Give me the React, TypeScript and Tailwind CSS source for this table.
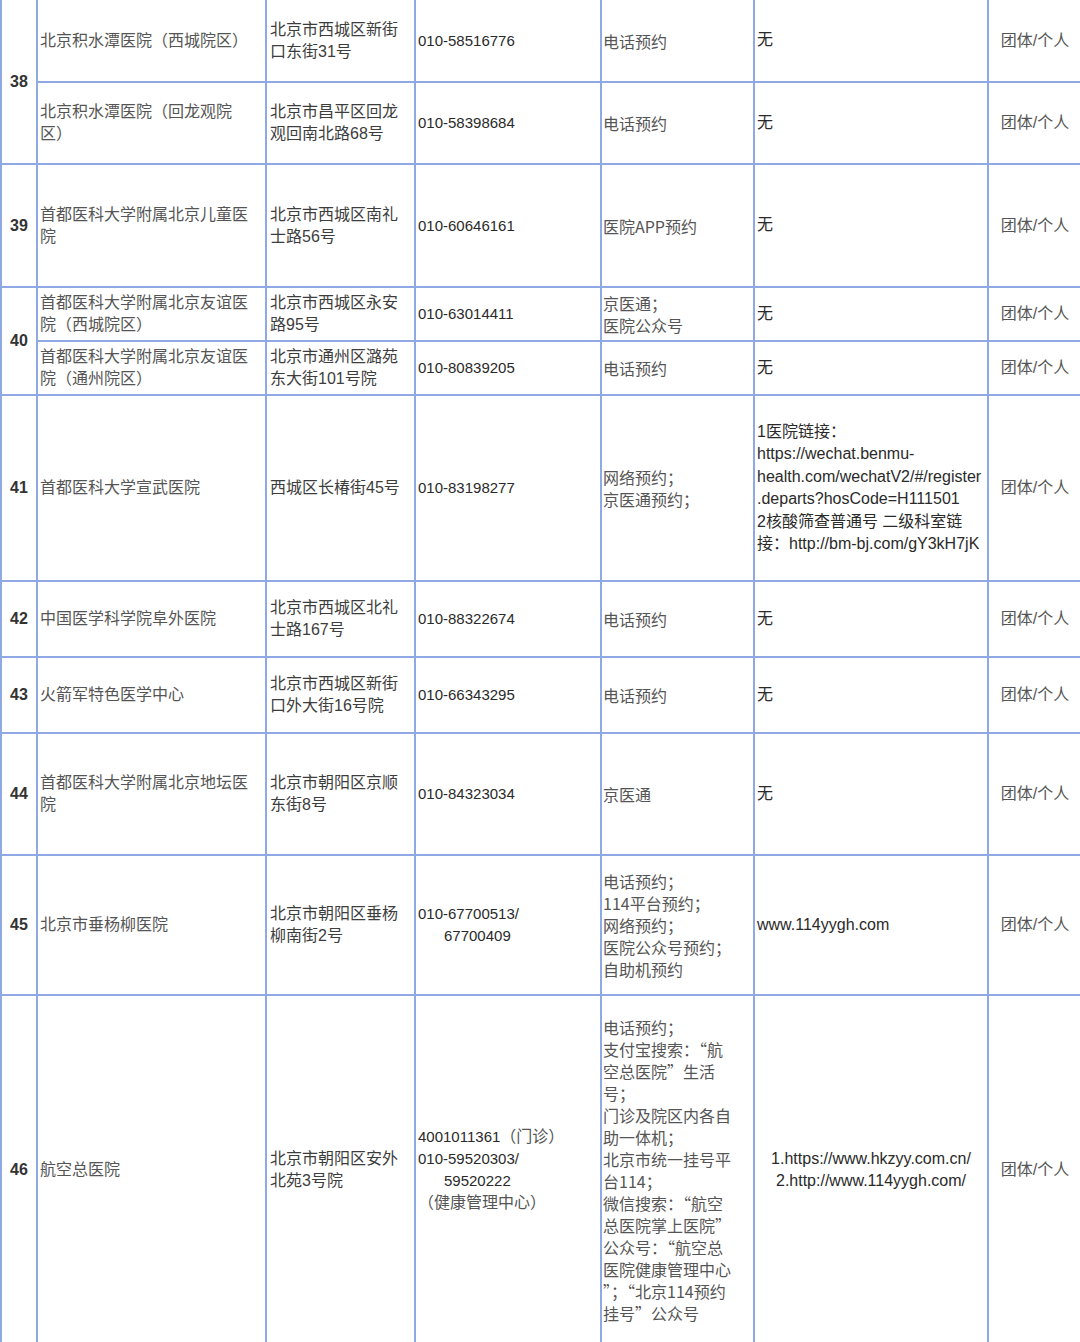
import React from 'react';

const td = 'border-2 border-[#8fa9e4] align-middle p-0';
const font = { fontFamily: '"Liberation Sans", "Noto Sans CJK SC", sans-serif' };
const cjk = { fontFamily: '"Noto Sans CJK SC", "Liberation Sans", sans-serif' };

const Lines: React.FC<{ lines: React.ReactNode[]; className?: string; style?: React.CSSProperties }> = ({
  lines,
  className = '',
  style,
}) => (
  <div className={`leading-[22px] whitespace-nowrap ${className}`} style={style}>
    {lines.map((l, i) => (
      <div key={i}>{l}</div>
    ))}
  </div>
);

const Num: React.FC<{ n: string; rowSpan?: number }> = ({ n, rowSpan }) => (
  <td rowSpan={rowSpan} className={`${td} text-center text-[16px] font-semibold text-[#333]`}>
    {n}
  </td>
);

const Name: React.FC<{ lines: string[] }> = ({ lines }) => (
  <td className={td}>
    <Lines lines={lines} className="pl-[2px] text-[#555]" />
  </td>
);

const Addr: React.FC<{ lines: string[] }> = ({ lines }) => (
  <td className={td}>
    <Lines lines={lines} className="pl-[3px] text-[#3d3d3d]" />
  </td>
);

const Phone: React.FC<{ children: React.ReactNode }> = ({ children }) => (
  <td className={`${td} text-[15px] text-[#2a2a2a]`}>
    <div className="pl-[2px] leading-[22px] whitespace-nowrap">{children}</div>
  </td>
);

const Method: React.FC<{ lines: string[] }> = ({ lines }) => (
  <td className={td}>
    <Lines lines={lines} className="pl-[1px] text-[#555]" style={cjk} />
  </td>
);

const Link: React.FC<{ children: React.ReactNode; center?: boolean }> = ({ children, center }) => (
  <td className={td}>
    <div className={`leading-[22.5px] whitespace-nowrap text-[#2a2a2a] ${center ? 'text-center' : 'pl-[2px]'}`}>
      {children}
    </div>
  </td>
);

const Type: React.FC = () => (
  <td className={`${td} border-r-0 text-center text-[#555]`}>团体/个人</td>
);

const App: React.FC = () => {
  return (
    <div className="w-[1080px] h-[1342px] overflow-hidden bg-white text-[16px]" style={font}>
      <table className="table-fixed border-collapse w-[1080px]">
        <colgroup>
          <col className="w-[36px]" />
          <col className="w-[229px]" />
          <col className="w-[149px]" />
          <col className="w-[186px]" />
          <col className="w-[153px]" />
          <col className="w-[234px]" />
          <col className="w-[93px]" />
        </colgroup>
        <tbody>
          <tr className="h-[82px] [&>td]:border-t-0">
            <Num n="38" rowSpan={2} />
            <Name lines={['北京积水潭医院（西城院区）']} />
            <Addr lines={['北京市西城区新街', '口东街31号']} />
            <Phone>010-58516776</Phone>
            <Method lines={['电话预约']} />
            <Link>无</Link>
            <Type />
          </tr>
          <tr className="h-[82px]">
            <Name lines={['北京积水潭医院（回龙观院', '区）']} />
            <Addr lines={['北京市昌平区回龙', '观回南北路68号']} />
            <Phone>010-58398684</Phone>
            <Method lines={['电话预约']} />
            <Link>无</Link>
            <Type />
          </tr>
          <tr className="h-[123px]">
            <Num n="39" />
            <Name lines={['首都医科大学附属北京儿童医', '院']} />
            <Addr lines={['北京市西城区南礼', '士路56号']} />
            <Phone>010-60646161</Phone>
            <Method lines={['医院APP预约']} />
            <Link>无</Link>
            <Type />
          </tr>
          <tr className="h-[54px]">
            <Num n="40" rowSpan={2} />
            <Name lines={['首都医科大学附属北京友谊医', '院（西城院区）']} />
            <Addr lines={['北京市西城区永安', '路95号']} />
            <Phone>010-63014411</Phone>
            <Method lines={['京医通；', '医院公众号']} />
            <Link>无</Link>
            <Type />
          </tr>
          <tr className="h-[54px]">
            <Name lines={['首都医科大学附属北京友谊医', '院（通州院区）']} />
            <Addr lines={['北京市通州区潞苑', '东大街101号院']} />
            <Phone>010-80839205</Phone>
            <Method lines={['电话预约']} />
            <Link>无</Link>
            <Type />
          </tr>
          <tr className="h-[186px]">
            <Num n="41" />
            <Name lines={['首都医科大学宣武医院']} />
            <Addr lines={['西城区长椿街45号']} />
            <Phone>010-83198277</Phone>
            <Method lines={['网络预约；', '京医通预约；']} />
            <Link>
              <div>1医院链接：</div>
              <div>https://wechat.benmu-</div>
              <div>health.com/wechatV2/#/register</div>
              <div>.departs?hosCode=H111501</div>
              <div>2核酸筛查普通号 二级科室链</div>
              <div>接：http://bm-bj.com/gY3kH7jK</div>
            </Link>
            <Type />
          </tr>
          <tr className="h-[76px]">
            <Num n="42" />
            <Name lines={['中国医学科学院阜外医院']} />
            <Addr lines={['北京市西城区北礼', '士路167号']} />
            <Phone>010-88322674</Phone>
            <Method lines={['电话预约']} />
            <Link>无</Link>
            <Type />
          </tr>
          <tr className="h-[76px]">
            <Num n="43" />
            <Name lines={['火箭军特色医学中心']} />
            <Addr lines={['北京市西城区新街', '口外大街16号院']} />
            <Phone>010-66343295</Phone>
            <Method lines={['电话预约']} />
            <Link>无</Link>
            <Type />
          </tr>
          <tr className="h-[122px]">
            <Num n="44" />
            <Name lines={['首都医科大学附属北京地坛医', '院']} />
            <Addr lines={['北京市朝阳区京顺', '东街8号']} />
            <Phone>010-84323034</Phone>
            <Method lines={['京医通']} />
            <Link>无</Link>
            <Type />
          </tr>
          <tr className="h-[140px]">
            <Num n="45" />
            <Name lines={['北京市垂杨柳医院']} />
            <Addr lines={['北京市朝阳区垂杨', '柳南街2号']} />
            <Phone>
              <div>010-67700513/</div>
              <div className="pl-[26px]">67700409</div>
            </Phone>
            <Method lines={['电话预约；', '114平台预约；', '网络预约；', '医院公众号预约；', '自助机预约']} />
            <Link>www.114yygh.com</Link>
            <Type />
          </tr>
          <tr className="h-[350px]">
            <Num n="46" />
            <Name lines={['航空总医院']} />
            <Addr lines={['北京市朝阳区安外', '北苑3号院']} />
            <Phone>
              <div>
                4001011361<span className="text-[#555] text-[16px]">（门诊）</span>
              </div>
              <div>010-59520303/</div>
              <div className="pl-[26px]">59520222</div>
              <div className="text-[#555] text-[16px]">（健康管理中心）</div>
            </Phone>
            <Method
              lines={[
                '电话预约；',
                '支付宝搜索：“航',
                '空总医院”生活',
                '号；',
                '门诊及院区内各自',
                '助一体机；',
                '北京市统一挂号平',
                '台114；',
                '微信搜索：“航空',
                '总医院掌上医院”',
                '公众号：“航空总',
                '医院健康管理中心',
                '”；“北京114预约',
                '挂号”公众号',
              ]}
            />
            <Link center>
              <div>1.https://www.hkzyy.com.cn/</div>
              <div>2.http://www.114yygh.com/</div>
            </Link>
            <Type />
          </tr>
        </tbody>
      </table>
    </div>
  );
};

export default App;
